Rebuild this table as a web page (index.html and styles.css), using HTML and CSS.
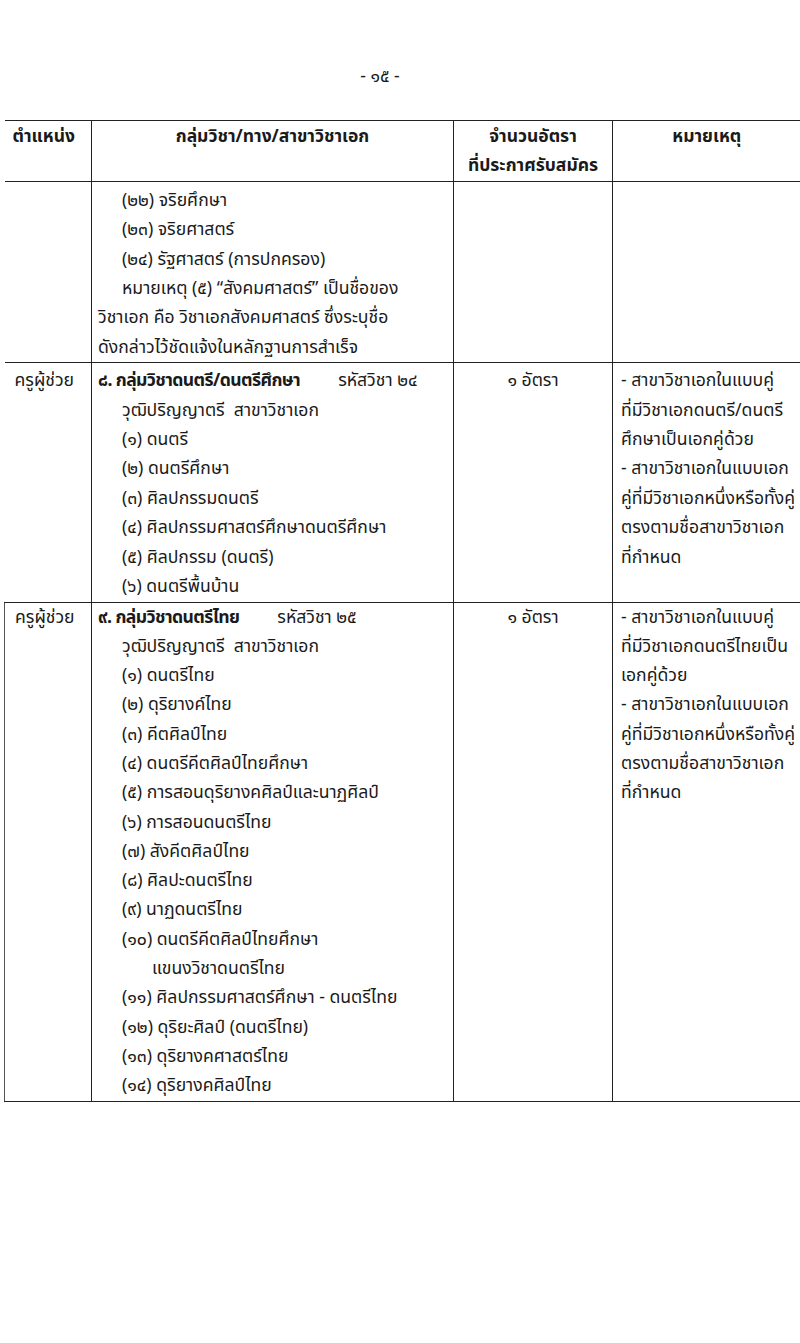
FILE: index.html
```html
<!DOCTYPE html>
<html lang="th">
<head>
<meta charset="utf-8">
<link rel="stylesheet" href="styles.css">
</head>
<body>
<div class="page">
  <div class="pageno">- ๑๕ -</div>
  <table class="doc">
    <colgroup>
      <col class="c1"><col class="c2"><col class="c3"><col class="c4">
    </colgroup>
    <thead>
      <tr class="head">
        <th class="h1">ตำแหน่ง</th>
        <th>กลุ่มวิชา/ทาง/สาขาวิชาเอก</th>
        <th>จำนวนอัตรา<br>ที่ประกาศรับสมัคร</th>
        <th>หมายเหตุ</th>
      </tr>
    </thead>
    <tbody>
      <tr class="r1">
        <td class="pos"></td>
        <td class="subj">
          <div class="ind">(๒๒) จริยศึกษา</div>
          <div class="ind">(๒๓) จริยศาสตร์</div>
          <div class="ind">(๒๔) รัฐศาสตร์ (การปกครอง)</div>
          <div class="ind">หมายเหตุ (๕) “สังคมศาสตร์” เป็นชื่อของ</div>
          <div>วิชาเอก คือ วิชาเอกสังคมศาสตร์ ซึ่งระบุชื่อ</div>
          <div>ดังกล่าวไว้ชัดแจ้งในหลักฐานการสำเร็จ</div>
        </td>
        <td></td>
        <td></td>
      </tr>
      <tr class="r2">
        <td class="pos">ครูผู้ช่วย</td>
        <td class="subj">
          <div class="grp"><b>๘. กลุ่มวิชาดนตรี/ดนตรีศึกษา</b><span class="code">รหัสวิชา ๒๔</span></div>
          <div class="ind">วุฒิปริญญาตรี&nbsp; สาขาวิชาเอก</div>
          <div class="ind">(๑) ดนตรี</div>
          <div class="ind">(๒) ดนตรีศึกษา</div>
          <div class="ind">(๓) ศิลปกรรมดนตรี</div>
          <div class="ind">(๔) ศิลปกรรมศาสตร์ศึกษาดนตรีศึกษา</div>
          <div class="ind">(๕) ศิลปกรรม (ดนตรี)</div>
          <div class="ind">(๖) ดนตรีพื้นบ้าน</div>
        </td>
        <td class="num">๑ อัตรา</td>
        <td class="note">
          <div>- สาขาวิชาเอกในแบบคู่</div>
          <div>ที่มีวิชาเอกดนตรี/ดนตรี</div>
          <div>ศึกษาเป็นเอกคู่ด้วย</div>
          <div>- สาขาวิชาเอกในแบบเอก</div>
          <div>คู่ที่มีวิชาเอกหนึ่งหรือทั้งคู่</div>
          <div>ตรงตามชื่อสาขาวิชาเอก</div>
          <div>ที่กำหนด</div>
        </td>
      </tr>
      <tr class="r3">
        <td class="pos edge">ครูผู้ช่วย</td>
        <td class="subj">
          <div class="grp"><b>๙. กลุ่มวิชาดนตรีไทย</b><span class="code">รหัสวิชา ๒๕</span></div>
          <div class="ind">วุฒิปริญญาตรี&nbsp; สาขาวิชาเอก</div>
          <div class="ind">(๑) ดนตรีไทย</div>
          <div class="ind">(๒) ดุริยางค์ไทย</div>
          <div class="ind">(๓) คีตศิลป์ไทย</div>
          <div class="ind">(๔) ดนตรีคีตศิลป์ไทยศึกษา</div>
          <div class="ind">(๕) การสอนดุริยางคศิลป์และนาฏศิลป์</div>
          <div class="ind">(๖) การสอนดนตรีไทย</div>
          <div class="ind">(๗) สังคีตศิลป์ไทย</div>
          <div class="ind">(๘) ศิลปะดนตรีไทย</div>
          <div class="ind">(๙) นาฏดนตรีไทย</div>
          <div class="ind">(๑๐) ดนตรีคีตศิลป์ไทยศึกษา</div>
          <div class="ind2">แขนงวิชาดนตรีไทย</div>
          <div class="ind">(๑๑) ศิลปกรรมศาสตร์ศึกษา - ดนตรีไทย</div>
          <div class="ind">(๑๒) ดุริยะศิลป์ (ดนตรีไทย)</div>
          <div class="ind">(๑๓) ดุริยางคศาสตร์ไทย</div>
          <div class="ind">(๑๔) ดุริยางคศิลป์ไทย</div>
        </td>
        <td class="num">๑ อัตรา</td>
        <td class="note">
          <div>- สาขาวิชาเอกในแบบคู่</div>
          <div>ที่มีวิชาเอกดนตรีไทยเป็น</div>
          <div>เอกคู่ด้วย</div>
          <div>- สาขาวิชาเอกในแบบเอก</div>
          <div>คู่ที่มีวิชาเอกหนึ่งหรือทั้งคู่</div>
          <div>ตรงตามชื่อสาขาวิชาเอก</div>
          <div>ที่กำหนด</div>
        </td>
      </tr>
    </tbody>
  </table>
</div>
</body>
</html>
```

FILE: styles.css
```css
html, body {
  margin: 0;
  padding: 0;
  background: #ffffff;
}
body {
  width: 800px;
  height: 1343px;
  overflow: hidden;
  font-family: "Noto Sans Thai", "Noto Sans", "DejaVu Sans", sans-serif;
  font-size: 17.6px;
  color: #1a1a1a;
}
.page {
  padding-top: 64px;
}
.pageno {
  text-align: center;
  width: 760px;
  line-height: 26px;
  font-size: 17.5px;
  margin-bottom: 30px;
}
.doc {
  margin-left: 4px;
  width: 796px;
  border-collapse: collapse;
  table-layout: fixed;
}
.c1 { width: 87px; }
.c2 { width: 362px; }
.c3 { width: 159px; }
.c4 { width: 188px; }
.doc th, .doc td {
  border: 1.5px solid #222;
  vertical-align: top;
  white-space: nowrap;
  line-height: 29.4px;
}
.doc th:first-child, .doc td:first-child {
  border-left: none;
}
.doc th:last-child, .doc td:last-child {
  border-right: none;
}
.doc td.edge {
  border-left: 1.5px solid #555;
}
.head th {
  height: 56px;
  padding: 1px 0 0;
  font-weight: 700;
  text-align: center;
  font-size: 17.5px;
}
.head th.h1 {
  text-align: left;
  padding-left: 8px;
}
.r1 td { padding: 4px 0 0; }
.r2 td { padding: 3px 0 0; }
.r3 td { padding: 0; line-height: 29.3px; }
.subj { padding-left: 6px !important; }
.ind { padding-left: 24px; }
.ind2 { padding-left: 54px; }
.grp b { letter-spacing: -0.6px; }
.grp .code { margin-left: 38px; }
.pos { padding-left: 10px !important; }
.num { text-align: center; }
.note { padding-left: 8px !important; }
```
